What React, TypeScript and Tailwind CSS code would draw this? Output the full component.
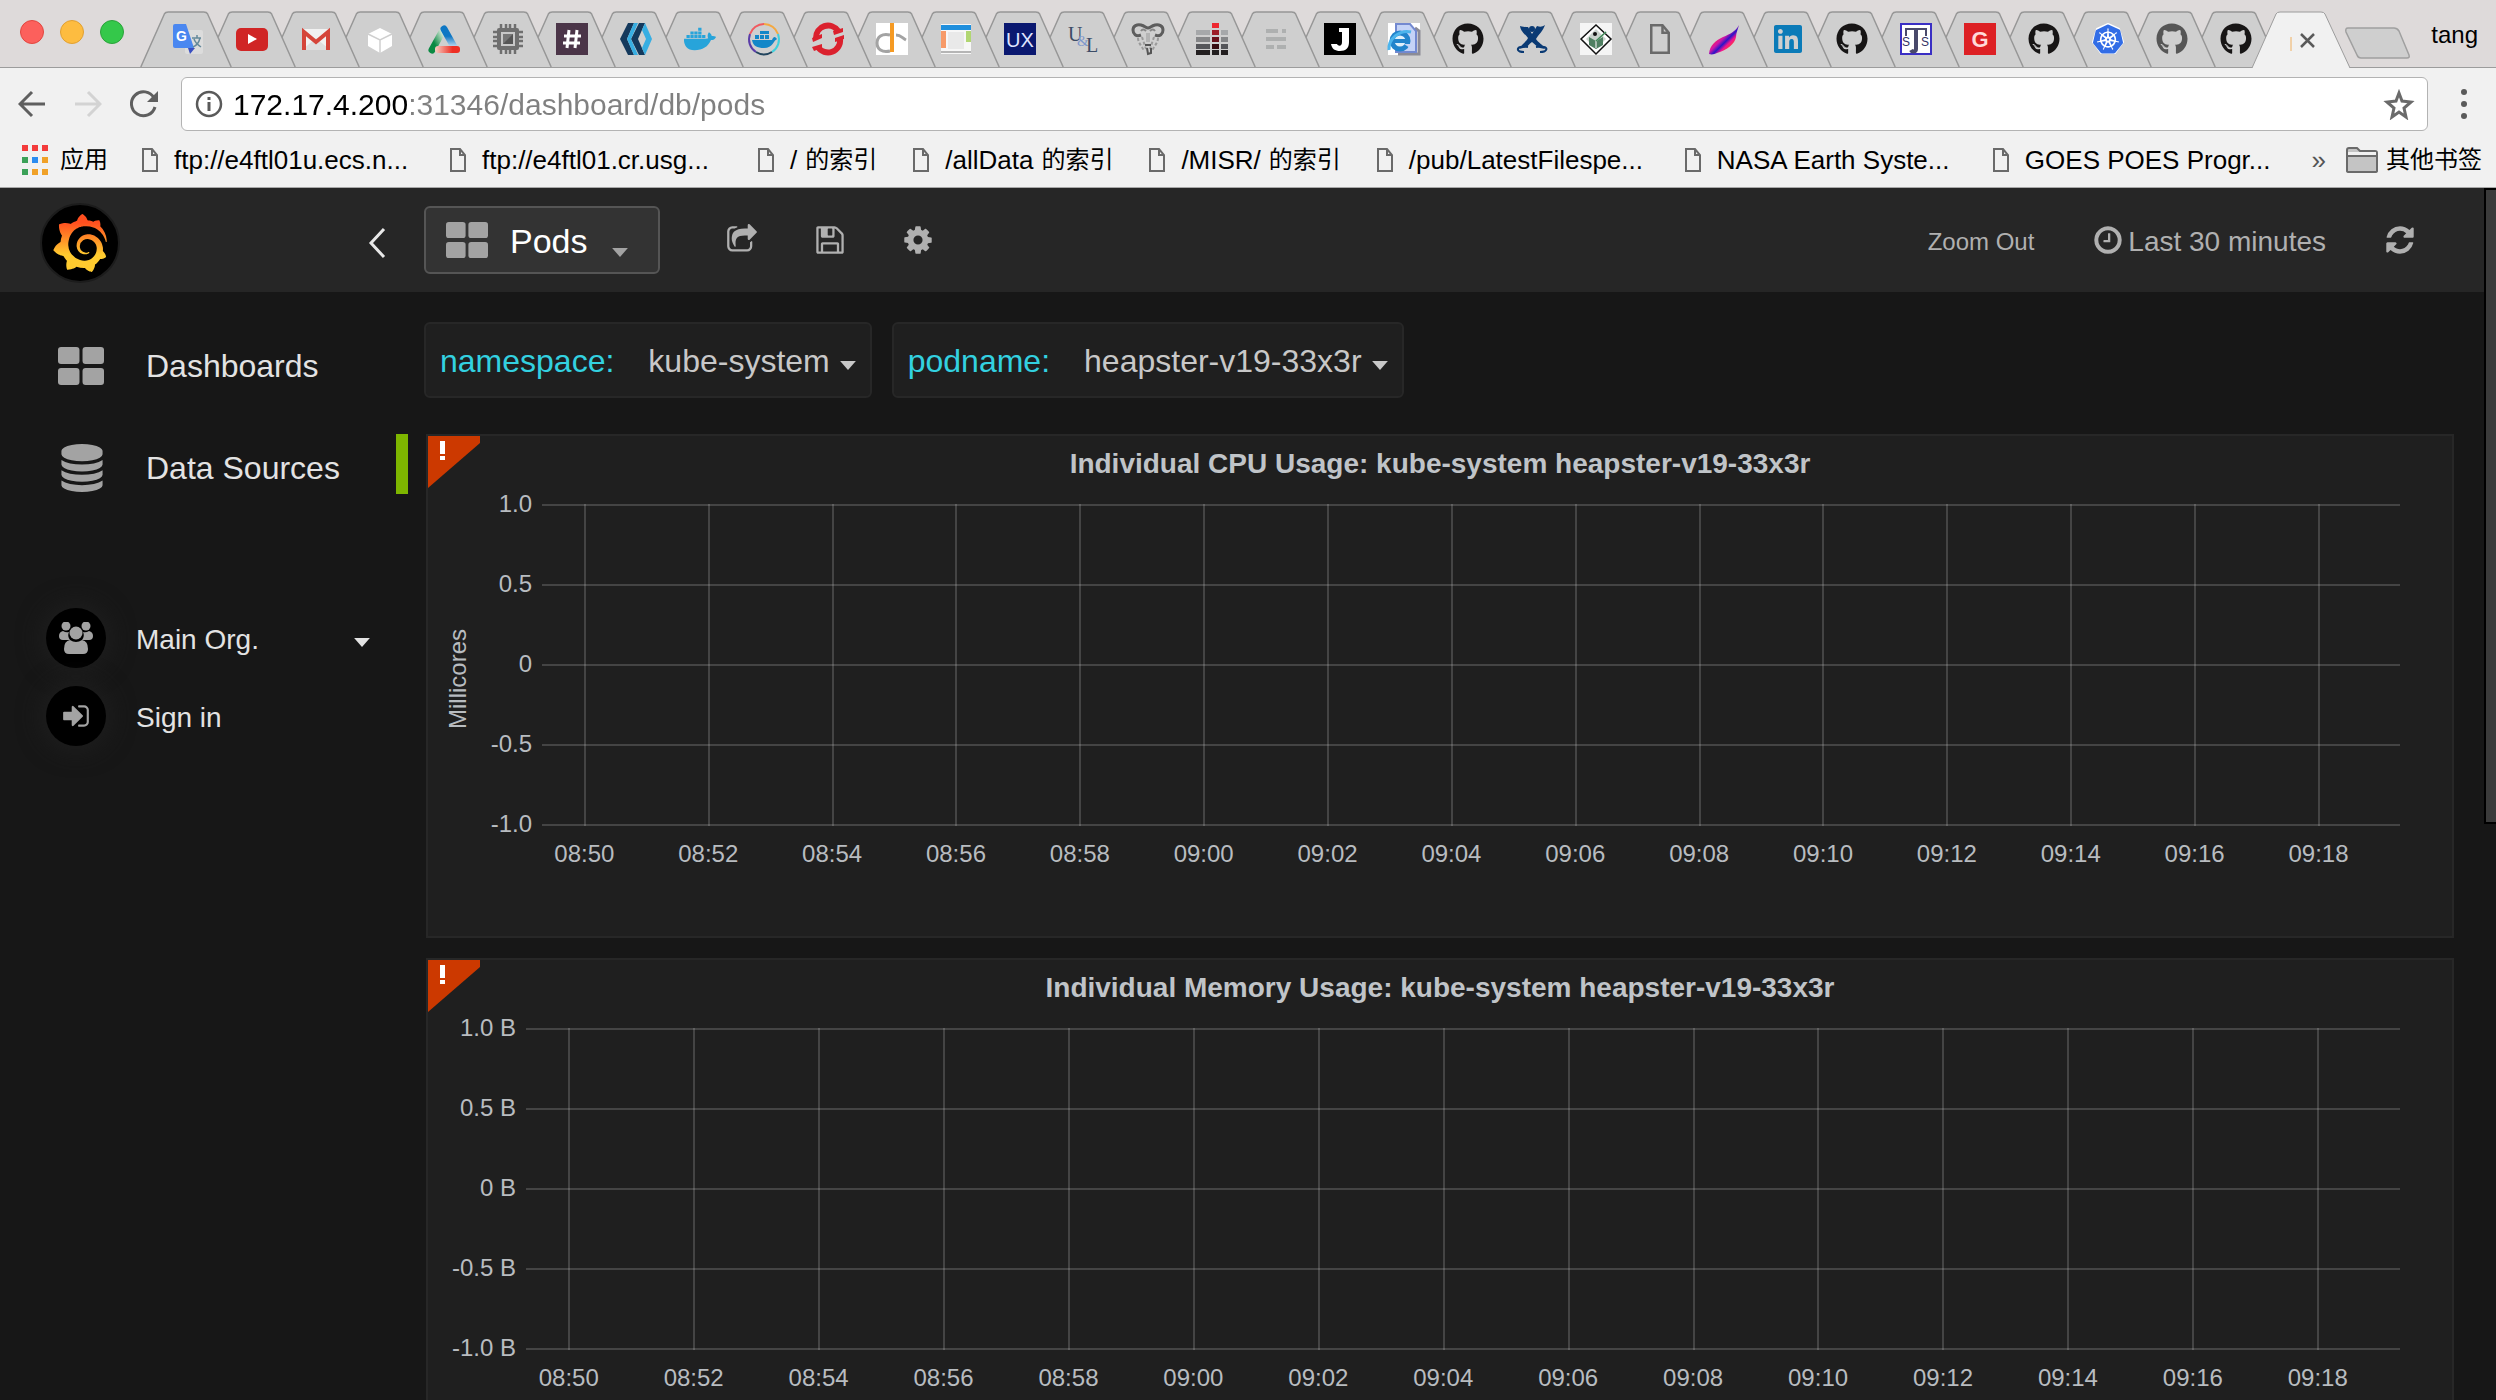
import React from "react";
import { FaGithub, FaDocker, FaLinkedin } from "react-icons/fa";
import { SiGrafana, SiKubernetes } from "react-icons/si";

const FA = {
  cog: "M1152 896q0-106-75-181t-181-75-181 75-75 181 75 181 181 75 181-75 75-181zm512-109v222q0 12-8 23t-20 13l-185 28q-19 54-39 91 35 50 107 138 10 12 10 25t-9 23q-27 37-99 108t-94 71q-12 0-26-9l-138-108q-44 23-91 38-16 136-29 186-7 28-36 28h-222q-14 0-24.5-8.5t-11.5-21.5l-28-184q-49-16-90-37l-141 107q-10 9-25 9-14 0-25-11-126-114-165-168-7-10-7-23 0-12 8-23 15-21 51-66.5t54-70.5q-27-50-41-99l-183-27q-13-2-21-12.5t-8-23.5v-222q0-12 8-23t19-13l186-28q14-46 39-92-40-57-107-138-10-12-10-24 0-10 9-23 26-36 98.5-107.5t94.5-71.5q13 0 26 10l138 107q44-23 91-38 16-136 29-186 7-28 36-28h222q14 0 24.5 8.5t11.5 21.5l28 184q49 16 90 37l142-107q9-9 24-9 13 0 25 10 129 119 165 170 7 8 7 22 0 12-8 23-15 21-51 66.5t-54 70.5q26 50 41 98l183 28q13 2 21 12.5t8 23.5z",
  refresh:
    "M1639 1056q0 5-1 7-64 268-268 434.5t-478 166.5q-146 0-282.5-55t-243.5-157l-129 129q-19 19-45 19t-45-19-19-45v-448q0-26 19-45t45-19h448q26 0 45 19t19 45-19 45l-137 137q71 66 161 102t187 36q134 0 250-65t186-179q11-17 53-117 8-23 30-23h192q13 0 22.5 9.5t9.5 22.5zm25-800v448q0 26-19 45t-45 19h-448q-26 0-45-19t-19-45 19-45l138-138q-148-137-349-137-134 0-250 65t-186 179q-11 17-53 117-8 23-30 23h-199q-13 0-22.5-9.5t-9.5-22.5v-7q65-268 270-434.5t480-166.5q146 0 284 55.5t245 156.5l130-129q19-19 45-19t45 19 19 45z",
  clock:
    "M1024 544v448q0 14-9 23t-23 9h-320q-14 0-23-9t-9-23v-64q0-14 9-23t23-9h224v-352q0-14 9-23t23-9h64q14 0 23 9t9 23zm416 352q0-148-73-273t-198-198-273-73-273 73-198 198-73 273 73 273 198 198 273 73 273-73 198-198 73-273zm224 0q0 209-103 385.5t-279.5 279.5-385.5 103-385.5-103-279.5-279.5-103-385.5 103-385.5 279.5-279.5 385.5-103 385.5 103 279.5 279.5 103 385.5z",
  save: "M512 1536h768v-384h-768v384zm896 0h128v-896q0-14-10-38.5t-20-34.5l-281-281q-10-10-34-20t-39-10v416q0 40-28 68t-68 28h-576q-40 0-68-28t-28-68v-416h-128v1280h128v-416q0-40 28-68t68-28h832q40 0 68 28t28 68v416zm-384-928v-320q0-13-9.5-22.5t-22.5-9.5h-192q-13 0-22.5 9.5t-9.5 22.5v320q0 13 9.5 22.5t22.5 9.5h192q13 0 22.5-9.5t9.5-22.5zm640 32v928q0 40-28 68t-68 28h-1344q-40 0-68-28t-28-68v-1344q0-40 28-68t68-28h928q40 0 88 20t76 48l280 280q28 28 48 76t20 88z",
  share:
    "M1472 989v259q0 119-84.5 203.5t-203.5 84.5h-832q-119 0-203.5-84.5t-84.5-203.5v-832q0-119 84.5-203.5t203.5-84.5h255q13 0 22.5 9.5t9.5 22.5q0 27-26 32-77 26-133 60-10 4-16 4h-112q-66 0-113 47t-47 113v832q0 66 47 113t113 47h832q66 0 113-47t47-113v-214q0-19 18-29 28-13 54-37 16-16 35-8 21 9 21 29zm237-496l-384 384q-18 19-45 19-12 0-25-5-39-17-39-59v-192h-160q-323 0-438 131-119 137-74 473 3 23-20 34-8 2-12 2-16 0-26-13-10-14-21-31t-39.5-68.5-49.5-99.5-38.5-114-17.5-122q0-49 3.5-91t14-90 28-88 47-81.500 68.5-74 94.5-61.5 124.5-48.5 159.5-30.5 196.500-11h160v-192q0-42 39-59 13-5 25-5 26 0 45 19l384 384q19 19 19 45t-19 45z",
  signIn:
    "M1312 896q0 26-19 45l-544 544q-19 19-45 19t-45-19-19-45v-288h-448q-26 0-45-19t-19-45v-384q0-26 19-45t45-19h448v-288q0-26 19-45t45-19 45 19l544 544q19 19 19 45zm352-352v704q0 119-84.5 203.5t-203.5 84.5h-320q-13 0-22.5-9.5t-9.5-22.5q0-4-1-20t-.5-26.5 3-23.5 10-19.5 20.5-6.5h320q66 0 113-47t47-113v-704q0-66-47-113t-113-47h-312l-11.500-1-11.500-3-8-5.500-7-9-2-13.500q0-4-1-20t-.5-26.500 3-23.500 10-19.500 20.500-6.500h320q119 0 203.500 84.500t84.500 203.500z",
  database:
    "M896 768q237 0 443-43t325-127v170q0 69-103 128t-280 93.500-385 34.500-385-34.500-280-93.500-103-128v-170q119 84 325 127t443 43zm0 768q237 0 443-43t325-127v170q0 69-103 128t-280 93.500-385 34.500-385-34.500-280-93.500-103-128v-170q119 84 325 127t443 43zm0-384q237 0 443-43t325-127v170q0 69-103 128t-280 93.500-385 34.500-385-34.500-280-93.500-103-128v-170q119 84 325 127t443 43zm0-1152q208 0 385 34.500t280 93.500 103 128v128q0 69-103 128t-280 93.500-385 34.500-385-34.500-280-93.500-103-128v-128q0-69 103-128t280-93.500 385-34.500z",
};

function FaIcon({ name, className = "" }: { name: keyof typeof FA; className?: string }) {
  return (
    <svg viewBox="0 0 1792 1792" className={className} fill="currentColor" aria-hidden="true">
      <path d={FA[name]} />
    </svg>
  );
}

function Caret({ className }: { className: string }) {
  return (
    <svg viewBox="0 0 14 8" className={className} fill="currentColor" aria-hidden="true">
      <path d="M0 0h14L7 8z" />
    </svg>
  );
}

function Tiles({ className }: { className: string }) {
  return (
    <svg viewBox="0 0 45 38" preserveAspectRatio="none" className={className} fill="currentColor" aria-hidden="true">
      <rect width="21" height="17" rx="3" />
      <rect x="24" width="21" height="17" rx="3" />
      <rect y="21" width="21" height="17" rx="3" />
      <rect x="24" y="21" width="21" height="17" rx="3" />
    </svg>
  );
}

function PageIcon({ className }: { className: string }) {
  return (
    <svg viewBox="0 0 16 24" className={className} fill="none" stroke="#6a6a6a" strokeWidth="2" aria-hidden="true">
      <path d="M1 1h9l5 6v16H1z" />
      <path d="M10 1v6h5" />
    </svg>
  );
}

/* ---------- favicons ---------- */

function Glyph({ children }: { children: React.ReactNode }) {
  return (
    <svg viewBox="0 0 32 32" className="size-8 overflow-visible" aria-hidden="true">
      {children}
    </svg>
  );
}

const sans = "Liberation Sans, sans-serif";

const favicons: { title: string; icon: React.ReactNode }[] = [
  {
    title: "Google Translate",
    icon: (
      <Glyph>
        <rect x="13" y="7" width="18" height="24" rx="2" fill="#dcdcdc" />
        <path d="M16 25h7l-5 6z" fill="#3a4fc0" />
        <path d="M3 1h11l8 24H3a2 2 0 0 1-2-2V3a2 2 0 0 1 2-2z" fill="#4a87f0" />
        <path d="M20 15h9M25 12v3M28 15c-1 4-4 8-7 9M22 16c1 3 4 6 7 8" stroke="#64899a" strokeWidth="1.500" fill="none" />
        <text x="4" y="18" fontSize="14" fontWeight="bold" fill="#fff" fontFamily={sans}>G</text>
      </Glyph>
    ),
  },
  {
    title: "YouTube",
    icon: (
      <Glyph>
        <rect x="0" y="5" width="32" height="23" rx="5" fill="#d02525" />
        <path d="M12 11l9 5-9 5z" fill="#fff" />
      </Glyph>
    ),
  },
  {
    title: "Gmail",
    icon: (
      <Glyph>
        <rect x="2" y="6" width="28" height="21" rx="1" fill="#f1f1f1" />
        <path d="M2 27l14-12 14 12z" fill="#dedede" />
        <path d="M4 27V9l12 10L28 9v18" fill="none" stroke="#d5453a" strokeWidth="4" />
      </Glyph>
    ),
  },
  {
    title: "Cube",
    icon: (
      <Glyph>
        <path d="M16 5l12 6v12l-12 7-12-7V11z" fill="#fff" />
        <path d="M4 11l12 6 12-6M16 17v13" stroke="#cfcfcf" strokeWidth="1.500" fill="none" />
      </Glyph>
    ),
  },
  {
    title: "Triangle",
    icon: (
      <Glyph>
        <defs>
          <linearGradient id="tg" x1="0" y1="1" x2="1" y2="0">
            <stop offset="0.3" stopColor="#0b8a43" />
            <stop offset="1" stopColor="#d6e8d8" />
          </linearGradient>
          <linearGradient id="tr">
            <stop offset="0" stopColor="#f6d0c6" />
            <stop offset="0.700" stopColor="#ee2f24" />
          </linearGradient>
          <linearGradient id="tb" x1="0" y1="0" x2="0" y2="1">
            <stop offset="0.400" stopColor="#0e77c4" />
            <stop offset="1" stopColor="#c6dcee" />
          </linearGradient>
        </defs>
        <path d="M4 27L14 9" stroke="url(#tg)" strokeWidth="7" strokeLinecap="round" />
        <path d="M16 6L26 24" stroke="url(#tb)" strokeWidth="7" strokeLinecap="round" />
        <rect x="7" y="23" width="25" height="7" rx="3" fill="url(#tr)" />
      </Glyph>
    ),
  },
  {
    title: "Chip",
    icon: (
      <Glyph>
        <path d="M9 1v30M14 1v30M18 1v30M23 1v30M1 9h30M1 14h30M1 18h30M1 23h30" stroke="#6f6f6f" strokeWidth="2.500" />
        <rect x="5" y="5" width="22" height="22" rx="2" fill="#6f6f6f" />
        <rect x="9" y="9" width="14" height="14" fill="#c8c8c8" />
        <rect x="11" y="11" width="10" height="10" fill="#555" />
        <path d="M11 11h10L11 21z" fill="#777" />
      </Glyph>
    ),
  },
  {
    title: "Slack",
    icon: (
      <Glyph>
        <rect width="32" height="32" fill="#4b3548" />
        <path d="M13 7l-2 18M21 7l-2 18M8 13h17M7 20h17" stroke="#fff" strokeWidth="3" />
      </Glyph>
    ),
  },
  {
    title: "Chevrons",
    icon: (
      <Glyph>
        <path d="M8 0h6L7 16l7 16H8L0 16z" fill="#14395c" />
        <path d="M19 0h6l-7 16 7 16h-6l-8-16z" fill="#14395c" />
        <path d="M14 0h4l-7 16 7 16h-4L7 16zM25 0l7 16-7 16-3-7 4-9-4-9z" fill="#37aee2" />
      </Glyph>
    ),
  },
  { title: "Docker", icon: <FaDocker className="size-8 text-[#27a4da]" /> },
  {
    title: "Docker Hub",
    icon: (
      <Glyph>
        <g fill="none" strokeWidth="2">
          <path d="M16 1a15 15 0 0 1 14 10" stroke="#f4a840" />
          <path d="M30 11a15 15 0 0 1-6 18" stroke="#3fd0dc" />
          <path d="M24 29a15 15 0 0 1-16 0" stroke="#22455e" />
          <path d="M8 29A15 15 0 0 1 2 11" stroke="#5a3da8" />
          <path d="M2 11A15 15 0 0 1 16 1" stroke="#f15a5f" />
        </g>
        <path d="M4 17h20c1-3 3-4 4-2 1 0 1 1 0 2-2 0-3 8-12 8-7 0-11-2-12-8zM7 12h4v4H7zM12 12h4v4h-4zM17 12h4v4h-4zM12 8h9v3h-9z" fill="#1387c8" />
      </Glyph>
    ),
  },
  {
    title: "OpenShift",
    icon: (
      <Glyph>
        <g fill="none" stroke="#db212e" strokeWidth="6">
          <path d="M4 15A12 12 0 0 1 26 8" />
          <path d="M28 16A12 12 0 0 1 6 24" />
        </g>
        <path d="M0 15l10-4v4L1 19zM21 8l10-3v4l-9 3zM0 24l10-3v4L2 28zM23 15l9-3v4l-9 3z" fill="#db212e" />
      </Glyph>
    ),
  },
  {
    title: "Data Hub",
    icon: (
      <Glyph>
        <rect width="32" height="32" fill="#fff" />
        <path d="M14 12C6 10 1 14 1 20s5 10 13 8" fill="none" stroke="#a3a3a3" strokeWidth="3" />
        <path d="M20 12c5 0 6 3 10 5" fill="none" stroke="#a3a3a3" strokeWidth="3" />
        <rect x="14" y="0" width="4" height="29" fill="#f59a23" />
      </Glyph>
    ),
  },
  {
    title: "Window",
    icon: (
      <Glyph>
        <rect x="1" y="1" width="30" height="30" fill="#f7f7f7" />
        <rect x="1" y="2" width="30" height="5" fill="#1f8fdd" />
        <rect x="1" y="8" width="5" height="17" fill="#f79a68" />
        <rect x="8" y="9" width="16" height="17" fill="#e9e9e9" />
        <rect x="26" y="8" width="5" height="11" fill="#b1d672" />
        <rect x="1" y="28" width="30" height="2" fill="#b5b5b5" />
      </Glyph>
    ),
  },
  {
    title: "UX",
    icon: (
      <Glyph>
        <rect width="32" height="32" fill="#0a1870" />
        <text x="16" y="24" textAnchor="middle" fontSize="20" fill="#dfe3ff" fontFamily={sans}>UX</text>
      </Glyph>
    ),
  },
  {
    title: "U&L",
    icon: (
      <Glyph>
        <text y="18" fontSize="20" fontFamily="Liberation Serif, serif" fill="#3c4c66">
          <tspan x="0">U</tspan>
          <tspan x="9" dy="5" fontSize="15" fill="#7f98cc">&amp;</tspan>
          <tspan x="18" dy="6">L</tspan>
        </text>
      </Glyph>
    ),
  },
  {
    title: "Goat",
    icon: (
      <Glyph>
        <g fill="none" strokeWidth="2">
          <path d="M9 12c-5 2-8-1-8-5s4-6 8-5 5 3 7 3 3-2 7-3 8 1 8 5-3 7-8 5" stroke="#5d5d5d" strokeWidth="3" />
          <path d="M9 8q2-3 5 0M18 8q3-3 5 0" stroke="#888" />
          <path d="M6 15c0 5 4 8 6 13M26 15c0 5-4 8-6 13M10 14l4 12M22 14l-4 12" strokeDasharray="3 2" stroke="#9a9a9a" />
          <path d="M16 10v9" stroke="#b4b4b4" strokeWidth="4" />
          <path d="M13 22h6M15 25l1 6 3-1v-5" stroke="#555" />
        </g>
      </Glyph>
    ),
  },
  {
    title: "Bars",
    icon: (
      <Glyph>
        <path d="M0 7h14v5H0zM25 7h7v5h-7z" fill="#a6a8aa" />
        <path d="M0 14h14v5H0zM25 14h7v5h-7z" fill="#858688" />
        <path d="M0 21h14v5H0zM25 21h7v5h-7z" fill="#55565a" />
        <path d="M0 27h14v5H0zM16 27h7v5h-7zM25 27h7v5h-7z" fill="#231f20" />
        <path d="M16 0h7v5h-7z" fill="#ed2830" />
        <path d="M16 7h7v5h-7z" fill="#9d1c26" />
        <path d="M16 14h7v5h-7z" fill="#6a1019" />
        <path d="M16 21h7v5h-7z" fill="#380c10" />
      </Glyph>
    ),
  },
  {
    title: "Lines",
    icon: (
      <Glyph>
        <path d="M6 6h12v4H6zM22 6h4v4h-4zM6 14h20v4H6zM6 22h8v4H6zM17 22h9v4h-9z" fill="#aeb0b0" />
      </Glyph>
    ),
  },
  {
    title: "J",
    icon: (
      <Glyph>
        <rect width="32" height="32" fill="#000" />
        <path d="M15 5h10v14c0 6-3 9-9 9-5 0-8-2-9-7h6c1 2 5 3 5-2V9h-3z" fill="#fff" />
      </Glyph>
    ),
  },
  {
    title: "Internet document",
    icon: (
      <Glyph>
        <rect width="32" height="32" fill="#fff" />
        <path d="M10 31h21V8l-4-3" stroke="#8b8b96" strokeWidth="3" fill="none" />
        <path d="M8 1h14l6 7v21H8z" fill="#c4d3f7" stroke="#7389d0" strokeWidth="2" />
        <circle cx="12" cy="18" r="8" fill="#dff0fb" stroke="#2284cc" strokeWidth="5" />
        <path d="M6 18h15" stroke="#2284cc" strokeWidth="4" />
        <path d="M16 21h6v4z" fill="#c4d3f7" />
        <path d="M1 27C0 16 12 6 23 9" stroke="#4cb4ec" strokeWidth="3" fill="none" />
      </Glyph>
    ),
  },
  { title: "GitHub", icon: <FaGithub className="size-8 text-[#171515]" /> },
  {
    title: "Confluence",
    icon: (
      <Glyph>
        <path d="M4 3c4 1 6 1 8 1l4 7 5-8c3 1 5 1 8-1-2 6-6 9-9 14 2 4 7 5 9 10l-5-1c-3-1-5-4-8-6-3 2-5 6-9 6l-4 1c3-5 7-7 9-11C9 11 5 9 4 3z" fill="#0a3a74" />
        <circle cx="16" cy="6" r="3" fill="#0a3a74" />
        <path d="M12 24c-6-1-11 0-10 3 1 2 4 2 6 2M20 24c6-1 12 0 10 3-1 2-4 2-6 2" stroke="#0a3a74" strokeWidth="2" fill="none" />
      </Glyph>
    ),
  },
  {
    title: "Diamond",
    icon: (
      <Glyph>
        <rect width="32" height="32" fill="#f5f5f5" />
        <path d="M16 2l15 14-15 15L1 16z" fill="#fff" stroke="#111" strokeWidth="1.500" />
        <path d="M16 6l10 10-10 10L6 16z" fill="#c9d2cc" />
        <path d="M9 14l7 4 7-4v8l-7 4-7-4z" fill="#4f7f61" />
        <path d="M16 18l10-9M16 18v7" stroke="#c9d2cc" strokeWidth="1.500" />
        <path d="M16 18l10-9" stroke="#3f8a58" strokeWidth="1.500" />
        <circle cx="15" cy="11" r="2" fill="#111" />
      </Glyph>
    ),
  },
  {
    title: "Untitled",
    icon: <PageIcon className="h-[30px] w-5" />,
  },
  {
    title: "Feather",
    icon: (
      <Glyph>
        <defs>
          <linearGradient id="fe" x1="0.200" y1="0.200" x2="0.850" y2="0.850">
            <stop offset="0.100" stopColor="#f0a01c" />
            <stop offset="0.250" stopColor="#f0206a" />
            <stop offset="0.400" stopColor="#d016a8" />
            <stop offset="0.550" stopColor="#2a16c8" />
            <stop offset="0.680" stopColor="#f01490" />
            <stop offset="0.850" stopColor="#ff4030" />
          </linearGradient>
        </defs>
        <path d="M31 2C27 9 22 11 15 14 7 18 2 22 1 31c3 1 6 0 8-1 10-3 18-9 19-16 0-4 2-8 3-12z" fill="url(#fe)" />
      </Glyph>
    ),
  },
  { title: "LinkedIn", icon: <FaLinkedin className="size-8 text-[#0b7bb8]" /> },
  { title: "GitHub", icon: <FaGithub className="size-8 text-[#171515]" /> },
  {
    title: "JTS",
    icon: (
      <Glyph>
        <rect x="1" y="1" width="30" height="30" fill="#fff" stroke="#3a2fc4" strokeWidth="2" />
        <path d="M5 6h22M6 6v7M26 6v7" stroke="#49496b" strokeWidth="2" fill="none" />
        <path d="M16 6v20c0 3-4 3-5 1" stroke="#49496b" strokeWidth="4" fill="none" />
        <text x="2" y="23" fontSize="12" fill="#333366" fontFamily={sans}>S</text>
        <text x="21" y="23" fontSize="12" fill="#333366" fontFamily={sans}>S</text>
      </Glyph>
    ),
  },
  {
    title: "G",
    icon: (
      <Glyph>
        <rect width="32" height="32" fill="#dd2024" />
        <text x="16" y="24" textAnchor="middle" fontSize="22" fontWeight="bold" fill="#ffd9d9" fontFamily={sans}>G</text>
      </Glyph>
    ),
  },
  { title: "GitHub", icon: <FaGithub className="size-8 text-[#171515]" /> },
  {
    title: "Kubernetes",
    icon: (
      <Glyph>
        <path d="M16 1l11 5 4 13-8 11H9L1 19 5 6z" fill="#fff" stroke="#fff" strokeWidth="2" strokeLinejoin="round" />
        <SiKubernetes x={1} y={1} size={30} color="#326de6" />
      </Glyph>
    ),
  },
  { title: "GitHub", icon: <FaGithub className="size-8 text-[#565656]" /> },
  { title: "GitHub", icon: <FaGithub className="size-8 text-[#171515]" /> },
];

function TabStrip() {
  return (
    <div className="flex h-[68px] items-end border-b border-[#9c9c9c] bg-[#dedada]">
      <div className="flex w-[140px] shrink-0 gap-4 self-start pt-5 pl-5">
        <button aria-label="Close window" className="size-6 rounded-full border border-[#e2463f] bg-[#fc605c]" />
        <button aria-label="Minimise window" className="size-6 rounded-full border border-[#e1a032] bg-[#fdbc40]" />
        <button aria-label="Zoom window" className="size-6 rounded-full border border-[#2ba23a] bg-[#34c84a]" />
      </div>
      <div className="flex min-w-0 items-end" role="tablist">
        {favicons.map((f, i) => (
          <button
            key={i}
            role="tab"
            aria-label={f.title}
            className="relative -mr-7 grid h-14 w-[92px] shrink-0 place-items-center"
            style={{ zIndex: favicons.length - i }}
          >
            <svg viewBox="0 0 92 57" className="absolute inset-0 h-14 w-[92px]" aria-hidden="true">
              <path d="M0 57L24 3q1-2 4-2h36q3 0 4 2l24 54" fill="#cfcfcf" stroke="#979797" strokeWidth="1.500" />
            </svg>
            <span className="relative ml-1">{f.icon}</span>
          </button>
        ))}
        <button role="tab" aria-selected="true" aria-label="Close tab" className="relative z-50 -mb-px grid h-[57px] w-[98px] shrink-0 place-items-center">
          <svg viewBox="0 0 98 57" className="absolute inset-0 h-[57px] w-[98px]" aria-hidden="true">
            <path d="M0 57L24 3q1-2 4-2h41q3 0 4 2l25 54" fill="#f1f1f1" stroke="#9c9c9c" strokeWidth="1" />
            <path d="M39 26v14" stroke="#f0b060" strokeWidth="1" />
            <path d="M49 23l13 13M62 23L49 36" stroke="#5a5a5a" strokeWidth="2.500" />
          </svg>
        </button>
        <button aria-label="New tab" className="relative mb-2 -ml-1.5 shrink-0">
          <svg viewBox="0 0 67 32" className="h-8 w-[67px]" aria-hidden="true">
            <path d="M4 1h46q3 0 5 3l10 24q1 3-2 3H17q-3 0-4-3L2 5q-1-4 2-4z" fill="#cfcfcf" stroke="#a0a0a0" strokeWidth="1.500" />
          </svg>
        </button>
      </div>
      <button className="mt-1.5 mr-[18px] ml-auto self-start text-[24px] leading-[58px] text-black">tang</button>
    </div>
  );
}

function AddressBar() {
  return (
    <div className="flex h-[72px] items-center bg-[#f1f1f1] pl-[18px]">
      <button aria-label="Back" className="mr-7">
        <svg viewBox="0 0 28 28" className="size-7" fill="none" stroke="#5f5f5f" strokeWidth="3" aria-hidden="true">
          <path d="M27 14H3M14 2L2 14l12 12" />
        </svg>
      </button>
      <button aria-label="Forward" className="mr-7">
        <svg viewBox="0 0 28 28" className="size-7" fill="none" stroke="#d3d3d3" strokeWidth="3" aria-hidden="true">
          <path d="M1 14h24M14 2l12 12-12 12" />
        </svg>
      </button>
      <button aria-label="Reload" className="mr-[23px]">
        <svg viewBox="0 0 28 28" className="size-7" aria-hidden="true">
          <path d="M24 8a12 12 0 1 0 1 9" fill="none" stroke="#5f5f5f" strokeWidth="3" />
          <path d="M28 1v11H17z" fill="#5f5f5f" />
        </svg>
      </button>
      <div className="flex h-[54px] min-w-0 flex-1 items-center rounded-md border border-[#b3b3b3] bg-white pr-3 pl-[13px]">
        <svg viewBox="0 0 28 28" className="size-7 shrink-0" fill="none" stroke="#5a5a5a" strokeWidth="2.500" aria-hidden="true">
          <circle cx="14" cy="14" r="12" />
          <path d="M14 12v9M14 7v3" strokeWidth="3" />
        </svg>
        <input
          aria-label="Address"
          defaultValue="172.17.4.200:31346/dashboard/db/pods"
          className="ml-2.5 h-12 min-w-0 flex-1 bg-[linear-gradient(to_right,#000_176px,#808080_176px)] bg-clip-text pt-0.5 text-[30px] text-transparent outline-none"
        />
        <button aria-label="Bookmark this page">
          <svg viewBox="0 0 32 32" className="size-8" fill="none" stroke="#6a6a6a" strokeWidth="3" aria-hidden="true">
            <path d="M16 5l3 8 9 1-7 6 2 9-7-5-7 5 2-9-7-6 9-1z" />
          </svg>
        </button>
      </div>
      <button aria-label="Menu" className="mr-7 ml-8">
        <svg viewBox="0 0 8 28" className="h-7 w-2 overflow-visible" fill="#5a5a5a" aria-hidden="true">
          <circle cx="4" cy="2" r="3" />
          <circle cx="4" cy="14" r="3" />
          <circle cx="4" cy="26" r="3" />
        </svg>
      </button>
    </div>
  );
}

const bookmarks = [
  { latin: "ftp://e4ftl01u.ecs.n...", cjk: "", wide: true },
  { latin: "ftp://e4ftl01.cr.usg...", cjk: "", wide: true },
  { latin: "/", cjk: "的索引", wide: false },
  { latin: "/allData", cjk: "的索引", wide: false },
  { latin: "/MISR/", cjk: "的索引", wide: false },
  { latin: "/pub/LatestFilespe...", cjk: "", wide: true },
  { latin: "NASA Earth Syste...", cjk: "", wide: true },
  { latin: "GOES POES Progr...", cjk: "", wide: true },
];

const appColors = [
  "bg-[#f33b3b]", "bg-[#f33b3b]", "bg-[#f33b3b]",
  "bg-[#3ba158]", "bg-[#2b8cf0]", "bg-[#f0a128]",
  "bg-[#3ba158]", "bg-[#f0a128]", "bg-[#f0a128]",
];

function BookmarksBar() {
  return (
    <nav className="flex h-12 items-start border-b border-[#a8a8a8] bg-[#f1f1f1] pl-[22px] text-[26px] leading-10 whitespace-nowrap text-black">
      <a href="#apps" className="flex items-center gap-3">
        <span className="grid grid-cols-3 gap-x-1 gap-y-1.5">
          {appColors.map((c, i) => (
            <span key={i} className={`size-1.5 ${c}`} />
          ))}
        </span>
        <span className="text-[24px]">应用</span>
      </a>
      <ul className="ml-[34px] flex">
        {bookmarks.map((b) => (
          <li key={b.latin} className={b.wide ? "w-[308px]" : "pr-9"}>
            <a href="#bookmark" className="flex items-center">
              <PageIcon className="mr-4 h-6 w-4 shrink-0" />
              {b.latin}
              {b.cjk && <span className="ml-2 text-[24px]">{b.cjk}</span>}
            </a>
          </li>
        ))}
      </ul>
      <button aria-label="More bookmarks" className="ml-auto text-[26px] text-[#555]">»</button>
      <a href="#other" className="mr-3.5 ml-5 flex items-center gap-2">
        <svg viewBox="0 0 32 26" className="h-[26px] w-8" fill="#c4c4c4" stroke="#6a6a6a" strokeWidth="2" aria-hidden="true">
          <path d="M1 24V3q0-2 2-2h8l3 3h15q2 0 2 2v18q0 1-2 1H3q-2 0-2-1z" />
          <path d="M2 5h28v3H2z" fill="#f1f1f1" stroke="none" />
          <path d="M1 9h30" />
        </svg>
        <span className="text-[24px]">其他书签</span>
      </a>
    </nav>
  );
}

/* ---------- dashboard ---------- */

function DashboardHeader() {
  return (
    <header className="flex h-[104px] shrink-0 items-center bg-[#262626] pr-20 text-[#b0b0b0]">
      <div className="flex w-[424px] items-center justify-between pt-1.5 pr-[38px] pl-10">
        <button aria-label="Home" className="grid size-20 place-items-center rounded-full border-2 border-[#1c1c1c] bg-black">
          <svg width="0" height="0" className="absolute" aria-hidden="true">
            <linearGradient id="flame" x1="0" y1="0" x2="0" y2="1">
              <stop offset="0.150" stopColor="#ff4f1f" />
              <stop offset="0.700" stopColor="#ffcb2f" />
            </linearGradient>
          </svg>
          <SiGrafana className="size-[58px] [&_path]:fill-[url(#flame)]" />
        </button>
        <button aria-label="Collapse menu" className="text-white">
          <svg viewBox="0 0 18 32" className="h-8 w-[18px]" fill="none" stroke="#e8e8e8" strokeWidth="3" aria-hidden="true">
            <path d="M16 2L3 16l13 14" />
          </svg>
        </button>
      </div>
      <button className="flex h-[68px] w-[236px] items-center rounded-md border-2 border-[#555] bg-[#333] pl-5 text-[34px] text-white">
        <Tiles className="h-9 w-[42px] text-[#a3a3a3]" />
        <span className="ml-[22px] pt-0.5">Pods</span>
        <Caret className="mt-6 ml-6 h-[9px] w-4 text-[#a3a3a3]" />
      </button>
      <div className="ml-[66px] flex gap-14">
        <button aria-label="Share dashboard"><FaIcon name="share" className="size-8" /></button>
        <button aria-label="Save dashboard"><FaIcon name="save" className="size-8" /></button>
        <button aria-label="Settings"><FaIcon name="cog" className="size-8" /></button>
      </div>
      <button className="ml-auto pt-1 text-[24px]">Zoom Out</button>
      <button className="ml-[58px] flex items-center gap-1 text-[28px]">
        <FaIcon name="clock" className="size-8" />
        <span className="pt-1">Last 30 minutes</span>
      </button>
      <button aria-label="Refresh" className="ml-[58px]"><FaIcon name="refresh" className="size-8" /></button>
    </header>
  );
}

function Sidebar() {
  return (
    <aside className="w-[396px] shrink-0 pt-[23px] text-[#e3e3e3]">
      <nav className="pl-[58px] text-[32px]">
        <a href="#dashboards" className="flex h-[102px] items-center">
          <Tiles className="mr-[42px] h-[38px] w-[46px] text-[#a3a3a3]" />
          Dashboards
        </a>
        <a href="#datasources" className="flex h-[102px] items-center">
          <FaIcon name="database" className="mr-10 size-12 text-[#a3a3a3]" />
          Data Sources
        </a>
      </nav>
      <div className="mt-[89px] flex flex-col gap-[18px] pr-[26px] pl-[46px] text-[28px]">
        <button className="flex items-center">
          <span className="grid size-[60px] place-items-center rounded-full bg-black text-[#a3a3a3] shadow-[0_0_24px_4px_#1f1f1f]">
            <svg viewBox="0 0 34 32" className="h-8 w-[34px]" fill="currentColor" aria-hidden="true">
              <circle cx="7" cy="4" r="4.500" />
              <circle cx="27" cy="4" r="4.500" />
              <path d="M4 9q3 2 6 1-2 4 1 8H4q-4 0-4-4 0-4 4-5zM30 9q-3 2-6 1 2 4-1 8h7q4 0 4-4 0-4-4-5z" />
              <circle cx="17" cy="11" r="6.500" />
              <path d="M11 18q6 4 12 0 6 1 6 9 0 5-5 5H10q-5 0-5-5 0-8 6-9z" />
            </svg>
          </span>
          <span className="ml-[30px] pt-1">Main Org.</span>
          <Caret className="mt-2 ml-auto h-[9px] w-4" />
        </button>
        <button className="flex items-center">
          <span className="grid size-[60px] place-items-center rounded-full bg-black text-[#a3a3a3] shadow-[0_0_24px_4px_#1f1f1f]">
            <FaIcon name="signIn" className="size-[30px]" />
          </span>
          <span className="ml-[30px] pt-1">Sign in</span>
        </button>
      </div>
    </aside>
  );
}

function Variable({ name, value }: { name: string; value: string }) {
  return (
    <label className="flex h-[76px] items-center rounded-md border-2 border-[#272727] bg-[#1f1f1f] px-3.5 pt-0.5 text-[32px] text-[#c8c8c8]">
      <span className="mr-[34px] text-[#33d1e0]">{name}:</span>
      <select className="field-sizing-content appearance-none bg-transparent outline-none">
        <option>{value}</option>
      </select>
      <Caret className="mt-2 ml-2.5 h-[9px] w-4" />
    </label>
  );
}

const times = [
  "08:50", "08:52", "08:54", "08:56", "08:58", "09:00", "09:02", "09:04",
  "09:06", "09:08", "09:10", "09:12", "09:14", "09:16", "09:18",
];

function Panel({ title, ticks, unit, plotMargin }: { title: string; ticks: string[]; unit?: string; plotMargin: string }) {
  return (
    <section className="relative h-[504px] shrink-0 border-2 border-[#272727] bg-[#1f1f1f] pt-1 pr-[52px]">
      <svg viewBox="0 0 52 52" className="absolute top-0 left-0 size-[52px]" role="img" aria-label="Error">
        <path d="M0 0h52v7L0 52z" fill="#cc3900" />
        <path d="M12 5h5v13h-5zM12 20h5v4h-5z" fill="#fff" />
      </svg>
      <h2 className="-mr-[52px] text-center text-[28px] leading-[48px] font-bold text-[#c0c4c8]">{title}</h2>
      <div className={plotMargin}>
        <svg className="mt-4 h-[322px] w-full overflow-visible text-[24px]" fill="#b8bcc0" role="img" aria-label={title}>
          {ticks.map((t, i) => (
            <g key={t}>
              <rect x="0" y={i * 80} width="100%" height="2" fill="#c8c8c8" fillOpacity="0.220" />
              <text x="-10" y={i * 80 + 8} textAnchor="end">{t}</text>
            </g>
          ))}
          {times.map((t, i) => (
            <g key={t}>
              <rect x={`${2.25 + (i * 20) / 3}%`} y="0" width="2" height="322" fill="#c8c8c8" fillOpacity="0.220" shapeRendering="crispEdges" />
              <text x={`${2.28 + (i * 20) / 3}%`} y="358" textAnchor="middle">{t}</text>
            </g>
          ))}
          {unit && (
            <text transform="translate(-76 175) rotate(-90)" textAnchor="middle">{unit}</text>
          )}
        </svg>
      </div>
    </section>
  );
}

export default function App() {
  return (
    <div className="flex h-screen flex-col overflow-hidden bg-[#171717] font-['Liberation_Sans','Noto_Sans_CJK_SC',sans-serif]">
      <div className="shrink-0">
        <TabStrip />
        <AddressBar />
        <BookmarksBar />
      </div>
      <div className="relative flex min-h-0 flex-1 flex-col">
        <DashboardHeader />
        <div className="flex min-h-0 flex-1">
          <Sidebar />
          <main className="min-w-0 flex-1 overflow-hidden pt-[30px] pr-[42px]">
            <div className="mb-9 ml-7 flex gap-5">
              <Variable name="namespace" value="kube-system" />
              <Variable name="podname" value="heapster-v19-33x3r" />
            </div>
            <div className="flex items-start gap-[18px]">
              <button aria-label="Row options" className="h-[60px] w-3 shrink-0 bg-[#7eb600]" />
              <div className="flex min-w-0 flex-1 flex-col gap-5">
                <Panel
                  title="Individual CPU Usage: kube-system heapster-v19-33x3r"
                  ticks={["1.0", "0.5", "0", "-0.5", "-1.0"]}
                  unit="Millicores"
                  plotMargin="ml-[114px]"
                />
                <Panel
                  title="Individual Memory Usage: kube-system heapster-v19-33x3r"
                  ticks={["1.0 B", "0.5 B", "0 B", "-0.5 B", "-1.0 B"]}
                  plotMargin="ml-[98px]"
                />
              </div>
            </div>
          </main>
        </div>
        <div className="absolute top-0 right-0 h-[636px] w-3 border-y-2 border-l-2 border-black bg-[#3b3b3b]" />
      </div>
    </div>
  );
}
